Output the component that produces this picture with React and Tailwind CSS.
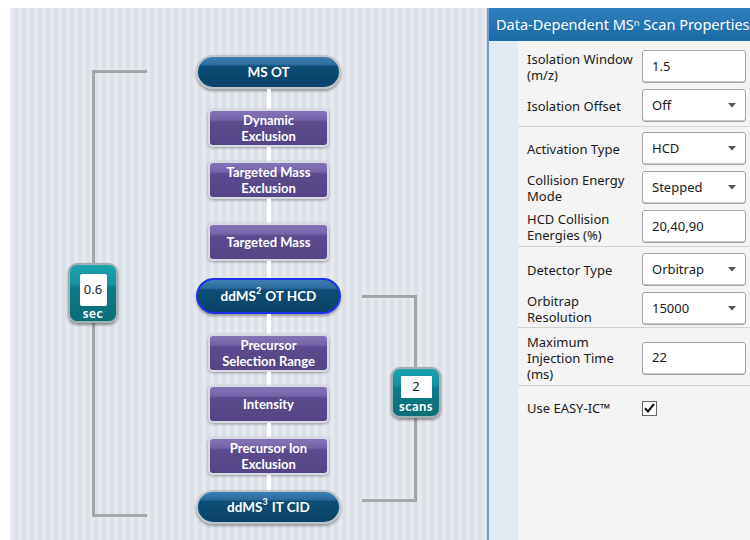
import React from 'react';

const PILL =
  "flex items-center justify-center w-[145px] h-[34px] rounded-full border-2 text-white text-[13.5px] font-bold font-['Lato',sans-serif] shadow-[0_2px_3px_rgba(0,0,0,0.35)] bg-[linear-gradient(180deg,#3e80b3_0%,#2b6d9f_24%,#0c4d77_32%,#094266_100%)]";
const BOX =
  "flex items-center justify-center text-center w-[121px] h-[38px] rounded-[5px] border-2 border-[#d9d9e2] text-white text-[13px] leading-[16px] font-bold font-['Lato',sans-serif] shadow-[0_1px_3px_rgba(0,0,0,0.35)] bg-[linear-gradient(180deg,#8575b8_0%,#7463a8_26%,#5b4b8f_32%,#554585_100%)]";
const BADGE =
  'absolute flex flex-col items-center rounded-[9px] border-2 border-[#9fb0b3] shadow-[0_2px_3px_rgba(0,0,0,0.4)] bg-[linear-gradient(180deg,#1ba3ad_0%,#14939e_34%,#0d7c87_40%,#0b6d77_100%)]';

function Link({ h }) {
  return <div className="w-[4px] bg-white" style={{ height: h }} />;
}

function Flow() {
  return (
    <div className="ml-[186px] w-[145px] pt-[47px] flex flex-col items-center">
      <div className={PILL + ' border-[#bfc4c9]'}>MS OT</div>
      <Link h={20} />
      <div className={BOX}>Dynamic<br />Exclusion</div>
      <Link h={14} />
      <div className={BOX}>Targeted Mass<br />Exclusion</div>
      <Link h={24} />
      <div className={BOX}>Targeted Mass</div>
      <Link h={17} />
      <div className={PILL + ' h-[36px] border-[#1f2ff0] shadow-[0_0_7px_3px_rgba(50,70,255,0.55)]'}>
        ddMS<sup className="text-[9px] -top-[5px] mr-[4px]">2</sup>OT HCD
      </div>
      <Link h={20} />
      <div className={BOX}>Precursor<br />Selection Range</div>
      <Link h={13} />
      <div className={BOX}>Intensity</div>
      <Link h={14} />
      <div className={BOX}>Precursor Ion<br />Exclusion</div>
      <Link h={15} />
      <div className={PILL + ' border-[#bfc4c9]'}>
        ddMS<sup className="text-[9px] -top-[5px] mr-[4px]">3</sup>IT CID
      </div>
    </div>
  );
}

function Caret() {
  return (
    <svg width="8" height="5" viewBox="0 0 8 5" className="shrink-0">
      <path d="M0 0h8L4 4.5z" fill="#555" />
    </svg>
  );
}

function Field({ value, select }) {
  return (
    <div className="w-[104px] h-[33px] bg-white border border-[#a3a3a3] rounded-[3px] flex items-center pl-[9px] pr-[9px] text-[13px] text-[#1a1a1a] shadow-[inset_0_-1px_0_#c8c8c8]">
      <span className="flex-1">{value}</span>
      {select && <Caret />}
    </div>
  );
}

function Label({ children }) {
  return <div className="w-[124px] pl-[9px] text-[13px] leading-[16px] text-[#1a1a1a]">{children}</div>;
}

function Row({ label, value, select, tall }) {
  return (
    <div className={'flex items-center ' + (tall ? 'min-h-[50px]' : 'h-[33px]')}>
      <Label>{label}</Label>
      <Field value={value} select={select} />
    </div>
  );
}

function Properties() {
  return (
    <div className="flex-1 flex flex-col border-l-2 border-[#6f9fcb] min-w-0">
      <div className="h-[33px] shrink-0 bg-[linear-gradient(180deg,#2f7fbc_0%,#1a6aa6_100%)] text-white text-[14.5px] leading-[33px] pl-[7px] whitespace-nowrap overflow-hidden">
        Data-Dependent MSⁿ Scan Properties Summary
      </div>
      <div className="flex flex-1">
        <div className="w-[29px] bg-[#e2ebf4]" />
        <div className="flex-1 bg-[#f4f4f4] flex flex-col">
          <div className="pt-[9px] pb-[4px] flex flex-col gap-[6px] border-b border-[#d2d2d2]">
            <Row label={<>Isolation Window<br />(m/z)</>} value="1.5" />
            <Row label="Isolation Offset" value="Off" select />
          </div>
          <div className="pt-[5px] pb-[3px] flex flex-col gap-[6px] border-b border-[#d2d2d2]">
            <Row label="Activation Type" value="HCD" select />
            <Row label={<>Collision Energy<br />Mode</>} value="Stepped" select />
            <Row label={<>HCD Collision<br />Energies (%)</>} value="20,40,90" />
          </div>
          <div className="pt-[6px] pb-[2px] flex flex-col gap-[6px] border-b border-[#d2d2d2]">
            <Row label="Detector Type" value="Orbitrap" select />
            <Row label={<>Orbitrap<br />Resolution</>} value="15000" select />
          </div>
          <div className="pt-[5px] pb-[2px] border-b border-[#d2d2d2]">
            <Row label={<>Maximum<br />Injection Time<br />(ms)</>} value="22" tall />
          </div>
          <div className="pt-[14px] flex items-center h-[30px]">
            <Label>Use EASY-IC™</Label>
            <div className="w-[15px] h-[15px] bg-white border border-[#666] flex items-center justify-center">
              <svg width="11" height="10" viewBox="0 0 11 10">
                <path d="M1 5.2l3 3.2L10 1" fill="none" stroke="#111" strokeWidth="2" />
              </svg>
            </div>
          </div>
        </div>
      </div>
    </div>
  );
}

export default function App() {
  return (
    <div className="w-[750px] h-[540px] bg-white overflow-hidden font-['Noto_Sans','Open_Sans',sans-serif]">
      <div className="flex h-full pt-[8px] pl-[10px]">
        <div className="relative w-[477px] h-full bg-[repeating-linear-gradient(90deg,#e6e9ef_0px,#e6e9ef_4px,#dce1e8_4px,#dce1e8_8px)]">
          <div className="absolute left-[82px] top-[62px] w-[55px] h-[447px] border-l-[3px] border-t-[3px] border-b-[3px] border-[#a6a6a6]" />
          <div className="absolute left-[352px] top-[287px] w-[55px] h-[207px] border-r-[3px] border-t-[3px] border-b-[3px] border-[#a6a6a6]" />
          <div className={BADGE + ' left-[58px] top-[255px] w-[50px] h-[60px] pt-[9px]'}>
            <div className="w-[27px] h-[33px] bg-white rounded-[2px] flex items-center justify-center text-[13px] text-[#222]">0.6</div>
            <div className="text-[13px] leading-[15px] text-white font-['Lato',sans-serif] font-bold tracking-[0.5px]">sec</div>
          </div>
          <div className={BADGE + ' left-[381px] top-[359px] w-[50px] h-[51px] pt-[7px]'}>
            <div className="w-[31px] h-[22px] bg-white flex items-center justify-center text-[13px] text-[#222]">2</div>
            <div className="text-[13px] leading-[16px] text-white font-['Lato',sans-serif] font-bold tracking-[0.5px]">scans</div>
          </div>
          <Flow />
        </div>
        <Properties />
      </div>
    </div>
  );
}
